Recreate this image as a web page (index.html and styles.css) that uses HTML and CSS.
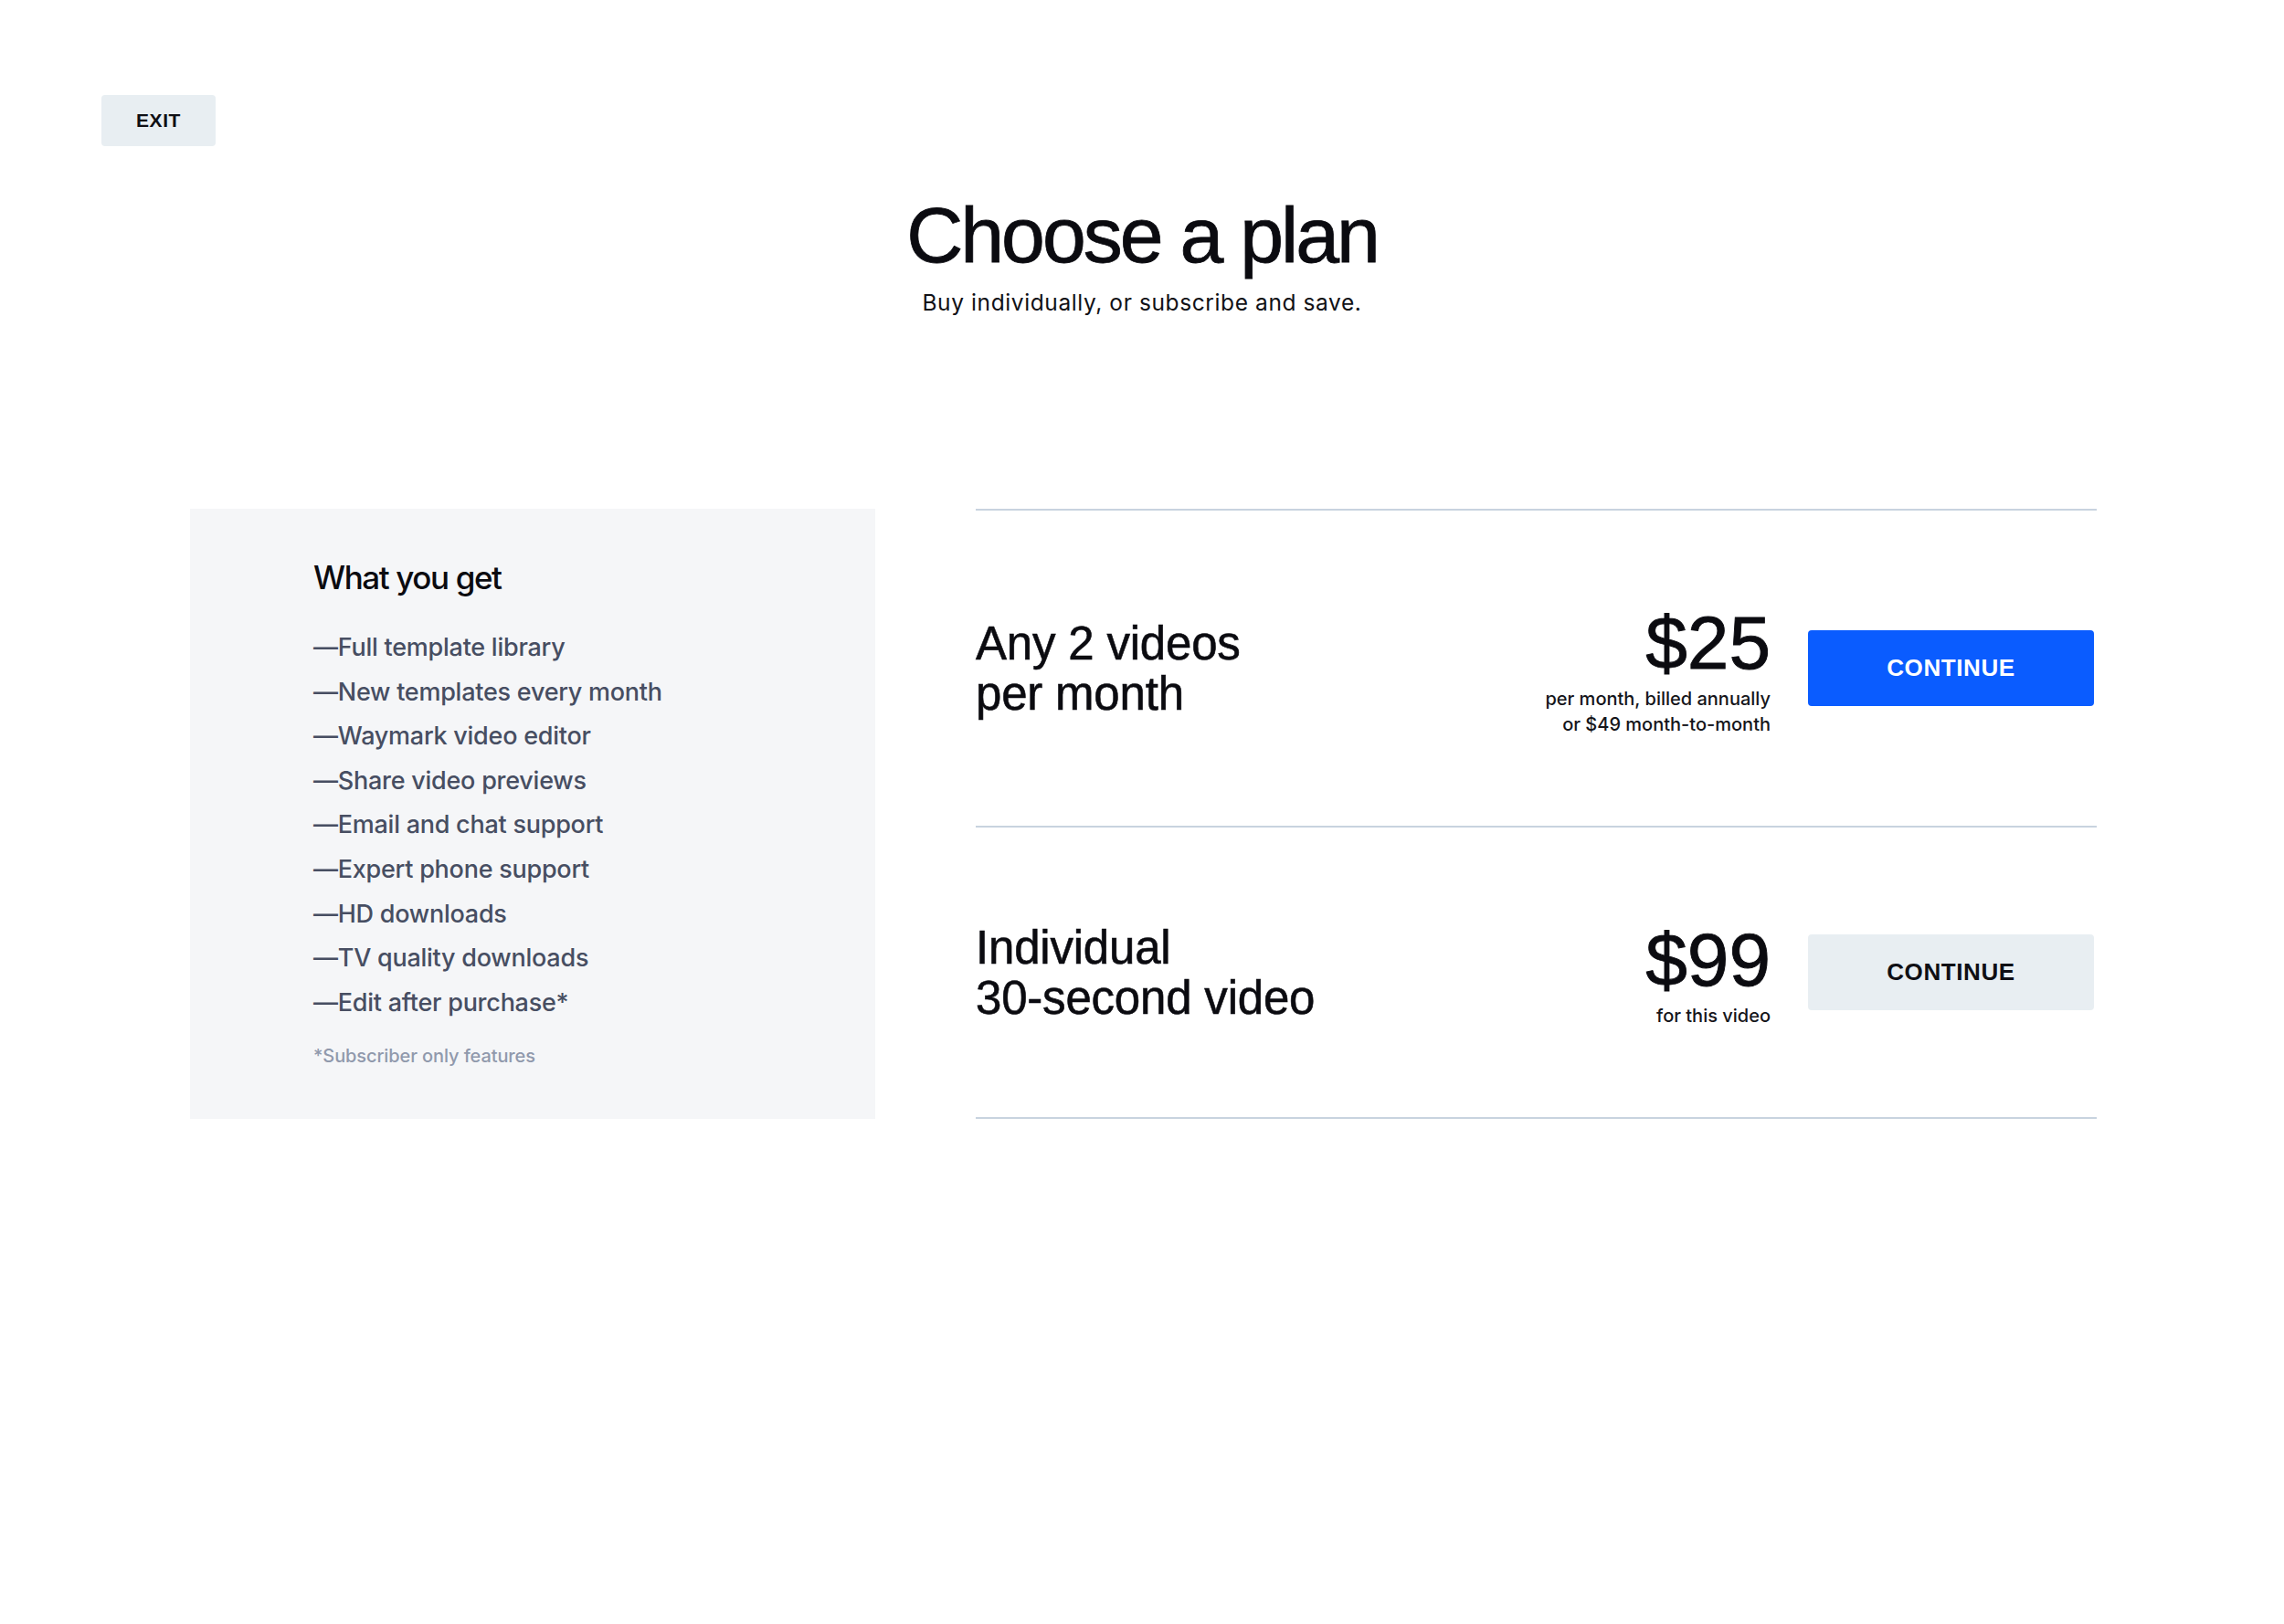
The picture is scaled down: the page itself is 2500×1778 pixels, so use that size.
FILE: index.html
```html
<!DOCTYPE html>
<html lang="en">
<head>
<meta charset="utf-8">
<title>Choose a plan</title>
<link rel="stylesheet" href="styles.css">
</head>
<body>
<header class="topbar">
  <button class="exit-btn" type="button">EXIT</button>
</header>

<section class="intro">
  <h1 class="intro-title">Choose a plan</h1>
  <p class="intro-sub">Buy individually, or subscribe and save.</p>
</section>

<main class="plans">
  <aside class="features">
    <h2 class="features-title">What you get</h2>
    <ul class="features-list">
      <li>—Full template library</li>
      <li>—New templates every month</li>
      <li>—Waymark video editor</li>
      <li>—Share video previews</li>
      <li>—Email and chat support</li>
      <li>—Expert phone support</li>
      <li>—HD downloads</li>
      <li>—TV quality downloads</li>
      <li>—Edit after purchase*</li>
    </ul>
    <p class="features-note">*Subscriber only features</p>
  </aside>

  <div class="options">
    <div class="option">
      <div class="option-name">Any 2 videos<br>per month</div>
      <div class="option-price">
        <div class="price">$25</div>
        <div class="price-note">per month, billed annually</div>
        <div class="price-note">or $49 month-to-month</div>
      </div>
      <button class="cta cta-primary" type="button">CONTINUE</button>
    </div>
    <div class="option">
      <div class="option-name">Individual<br>30-second video</div>
      <div class="option-price">
        <div class="price">$99</div>
        <div class="price-note">for this video</div>
      </div>
      <button class="cta cta-secondary" type="button">CONTINUE</button>
    </div>
  </div>
</main>
</body>
</html>
```

FILE: styles.css
```css
html, body {
  margin: 0;
  padding: 0;
  background: #ffffff;
}

body {
  font-family: Inter, "Liberation Sans", Arial, sans-serif;
  color: #0b0b10;
  -webkit-font-smoothing: antialiased;
}

/* ---------- top bar ---------- */
.topbar {
  padding: 104px 0 0 111px;
}

.exit-btn {
  display: block;
  width: 125px;
  height: 56px;
  border: 0;
  border-radius: 4px;
  background: #e8eef2;
  color: #0f0f14;
  font-family: "Liberation Sans", Arial, sans-serif;
  font-weight: 700;
  font-size: 21px;
  letter-spacing: 0.6px;
  padding: 0;
  cursor: pointer;
}

/* ---------- intro ---------- */
.intro {
  margin-top: 50px;
  text-align: center;
}

.intro-title {
  margin: 0;
  font-family: "Liberation Sans", Arial, sans-serif;
  font-weight: 400;
  font-size: 86px;
  line-height: 94px;
  letter-spacing: -3px;
  color: #0b0b10;
  -webkit-text-stroke: 0.8px #0b0b10;
}

.intro-sub {
  margin: 11px 0 0;
  font-size: 24.5px;
  line-height: 32px;
  letter-spacing: 0.6px;
  color: #111116;
}

/* ---------- plans ---------- */
.plans {
  display: grid;
  grid-template-columns: 750px 1227px;
  column-gap: 110px;
  justify-content: center;
  padding-left: 3px;
  margin-top: 210px;
}

.features {
  background: #f5f6f8;
  padding: 54px 40px 40px 135px;
}

.features-title {
  margin: 0;
  font-size: 35px;
  line-height: 42px;
  font-weight: 500;
  letter-spacing: -1.4px;
  color: #0b0b10;
}

.features-list {
  list-style: none;
  margin: 32px 0 0;
  padding: 0;
}

.features-list li {
  font-size: 27px;
  line-height: 48.6px;
  font-weight: 500;
  letter-spacing: -0.25px;
  color: #474e62;
}

.features-note {
  margin: 20px 0 0;
  font-size: 20px;
  line-height: 28px;
  font-weight: 500;
  letter-spacing: -0.1px;
  color: #9099ac;
}

.options {
  border-top: 2px solid #c8d3df;
}

.option {
  display: flex;
  align-items: center;
  padding: 97.5px 3px 97.5px 0;
  border-bottom: 2px solid #c8d3df;
}

.option-name {
  flex: 1;
  font-family: "Liberation Sans", Arial, sans-serif;
  font-size: 51px;
  line-height: 55px;
  letter-spacing: -0.2px;
  color: #0b0b10;
  -webkit-text-stroke: 0.6px #0b0b10;
}

.option-price {
  text-align: right;
  margin-right: 41px;
}

.price {
  font-family: "Liberation Sans", Arial, sans-serif;
  font-size: 82px;
  line-height: 94px;
  letter-spacing: 0;
  color: #0b0b10;
  -webkit-text-stroke: 0.9px #0b0b10;
}

.price-note {
  font-size: 20px;
  line-height: 28px;
  font-weight: 500;
  color: #15151a;
}

.cta {
  width: 313px;
  height: 83px;
  border: 0;
  border-radius: 4px;
  font-family: "Liberation Sans", Arial, sans-serif;
  font-weight: 700;
  font-size: 26px;
  letter-spacing: 0.6px;
  padding: 0;
  cursor: pointer;
}

.cta-primary {
  background: #0a5cff;
  color: #ffffff;
}

.cta-secondary {
  background: #e8eef2;
  color: #0f0f14;
}
```
